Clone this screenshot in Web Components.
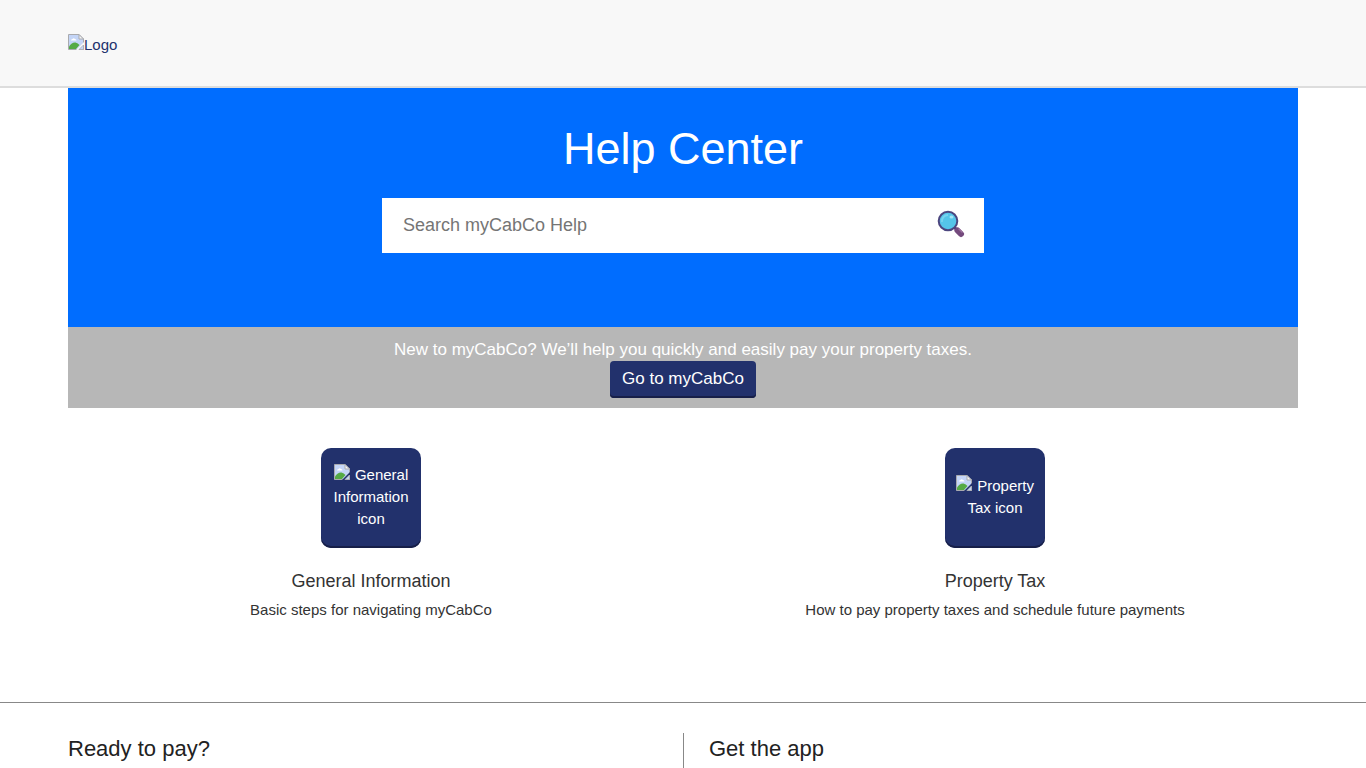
<!DOCTYPE html>
<html lang="en">
<head>
<meta charset="utf-8">
<meta name="viewport" content="width=device-width, initial-scale=1">
<title>Help Center</title>
<style>
html { --navy: #22316c; --gutter: 68px; }
body { margin: 0; background: #fff; color: #333; font: 15px/22px "Liberation Sans", Arial, sans-serif; }
</style>
</head>
<body>
<help-page></help-page>
<script>
function define(name, html, setup) {
  const template = document.createElement('template');
  template.innerHTML = html;
  customElements.define(name, class extends HTMLElement {
    connectedCallback() {
      if (this.shadowRoot) return;
      this.attachShadow({ mode: 'open' }).append(template.content.cloneNode(true));
      if (setup) setup(this, this.shadowRoot);
    }
  });
}

define('missing-image', `
<style>
:host { display: inline; }
svg { width: 16px; height: 16px; vertical-align: baseline; }
</style>
<svg viewBox="0 0 16 16" aria-hidden="true">
  <path d="M.5 .5H11L15.500 5V15.500H.5Z" fill="#c5d5f5" stroke="#a9aaae"/>
  <path d="M1 1H10.500V5.500H15V8L8 15H1Z" fill="#c4d5f7"/>
  <path d="M3 6.500Q3 5 4.500 5Q5.500 3.500 7 5Q8.500 5 8.500 6.500Z" fill="#fff"/>
  <path d="M1 15V12.500Q4 8 7.500 8.500Q10 9 11.500 11L8 15Z" fill="#55aa45"/>
  <path d="M11 .5V5H15.500Z" fill="#f5f5f5" stroke="#a9aaae"/>
  <path d="M8 16L16 8V10.500L10.500 16Z" fill="var(--tear, #fff)"/>
  <path d="M11 15.500H15.500V11Z" fill="#c4d5f7" stroke="#a9aaae" stroke-width=".7"/>
</svg><slot></slot>`);

define('site-header', `
<style>
:host { display: flex; align-items: center; box-sizing: border-box; height: 88px; padding: 0 var(--gutter); background: #f8f8f8; border-bottom: 2px solid #ddd; --tear: #f8f8f8; }
a { color: var(--navy); text-decoration: none; padding-top: 4px; }
</style>
<a href="#home"><missing-image>Logo</missing-image></a>`);

define('search-box', `
<style>
:host { display: block; width: 602px; max-width: 90%; }
form { display: flex; box-sizing: border-box; height: 55px; margin: 0; background: #fff; }
input { flex: 1; min-width: 0; border: 0; padding: 0 21px 2px; background: transparent; font: 18px/22px "Liberation Sans", Arial, sans-serif; color: #333; outline: 0; }
input::placeholder { color: #757575; opacity: 1; }
button { display: flex; align-items: center; border: 0; background: none; padding: 0 19px 3px; cursor: pointer; }
svg { width: 28px; height: 28px; }
</style>
<form role="search">
  <input type="search" aria-label="Search myCabCo Help" placeholder="Search myCabCo Help">
  <button type="button" aria-label="Search">
    <svg viewBox="0 0 28 28" aria-hidden="true">
      <path d="M17 17L20 20" stroke="#533b78" stroke-width="3"/>
      <path d="M20.500 20.500L24 24" stroke="#744a7d" stroke-width="6" stroke-linecap="round"/>
      <path d="M22 19L25 22" stroke="#9c729e" stroke-width="1.500" stroke-linecap="round"/>
      <circle cx="11" cy="11" r="9.300" fill="#55c5e9" stroke="#4c467f" stroke-width="2"/>
      <path d="M5 12A6 6 0 0 1 11 5" fill="none" stroke="#77d4ef" stroke-width="2"/>
      <ellipse cx="14.500" cy="7" rx="2" ry="1.500" fill="#a4e4f4"/>
    </svg>
  </button>
</form>`);

define('help-hero', `
<style>
:host { display: block; margin: 0 var(--gutter); text-align: center; color: #fff; }
.top { display: flex; flex-direction: column; align-items: center; gap: 20px; background: #006dff; padding: 32px 0 74px; }
h1 { margin: 0; font-size: 45px; line-height: 58px; font-weight: 400; }
.intro { display: flex; flex-direction: column; align-items: center; background: #b7b7b7; padding: 12px 0 10px; font-size: 17px; }
p { margin: 0; }
a { box-sizing: border-box; height: 37px; line-height: 35px; padding: 0 12px; border-radius: 4px; background: var(--navy); box-shadow: inset 0 -2px #171f48; color: #fff; text-decoration: none; }
</style>
<div class="top"><h1>Help Center</h1><search-box></search-box></div>
<div class="intro"><p>New to myCabCo? We’ll help you quickly and easily pay your property taxes.</p><a href="#mycabco">Go to myCabCo</a></div>`);

define('topic-card', `
<style>
:host { display: flex; flex-direction: column; align-items: center; text-align: center; color: #333; }
a { color: inherit; text-decoration: none; }
.tile { display: flex; align-items: center; box-sizing: border-box; width: 100px; height: 100px; padding: 0 10px 2px; border-radius: 10px; background: var(--navy); box-shadow: inset 0 -2px #171f48; color: #fff; --tear: var(--navy); }
.tile span { flex: 1; }
missing-image { margin-right: 1px; }
b { font-weight: 400; }
h2 { margin: 20px 0 5px; font-size: 18px; line-height: 26px; font-weight: 400; }
p { margin: 0; }
</style>
<a class="tile" href="#topic"><span><missing-image></missing-image> <b></b></span></a>
<h2><a href="#topic"></a></h2>
<p><slot></slot></p>`, (host, root) => {
  const name = host.getAttribute('name');
  root.querySelector('b').textContent = name + ' icon';
  root.querySelector('h2 a').textContent = name;
});

define('topic-grid', `
<style>
:host { display: grid; grid-template-columns: 1fr 1fr; gap: 18px; padding: 40px var(--gutter) 81px; }
</style><slot></slot>`);

define('page-footer', `
<style>
:host { display: grid; grid-template-columns: 1fr 1fr; flex: 1; border-top: 1px solid #888; padding: 30px var(--gutter) 0; color: #222; }
section + section { border-left: 1px solid #888; padding-left: 25px; }
h2 { margin: 0; font-size: 22px; line-height: 32px; font-weight: 400; }
</style>
<section><h2>Ready to pay?</h2></section>
<section><h2>Get the app</h2></section>`);

define('help-page', `
<style>
:host { display: flex; flex-direction: column; min-height: 100vh; }
</style>
<site-header></site-header>
<help-hero></help-hero>
<topic-grid>
  <topic-card name="General Information">Basic steps for navigating myCabCo</topic-card>
  <topic-card name="Property Tax">How to pay property taxes and schedule future payments</topic-card>
</topic-grid>
<page-footer></page-footer>`);
</script>
</body>
</html>
